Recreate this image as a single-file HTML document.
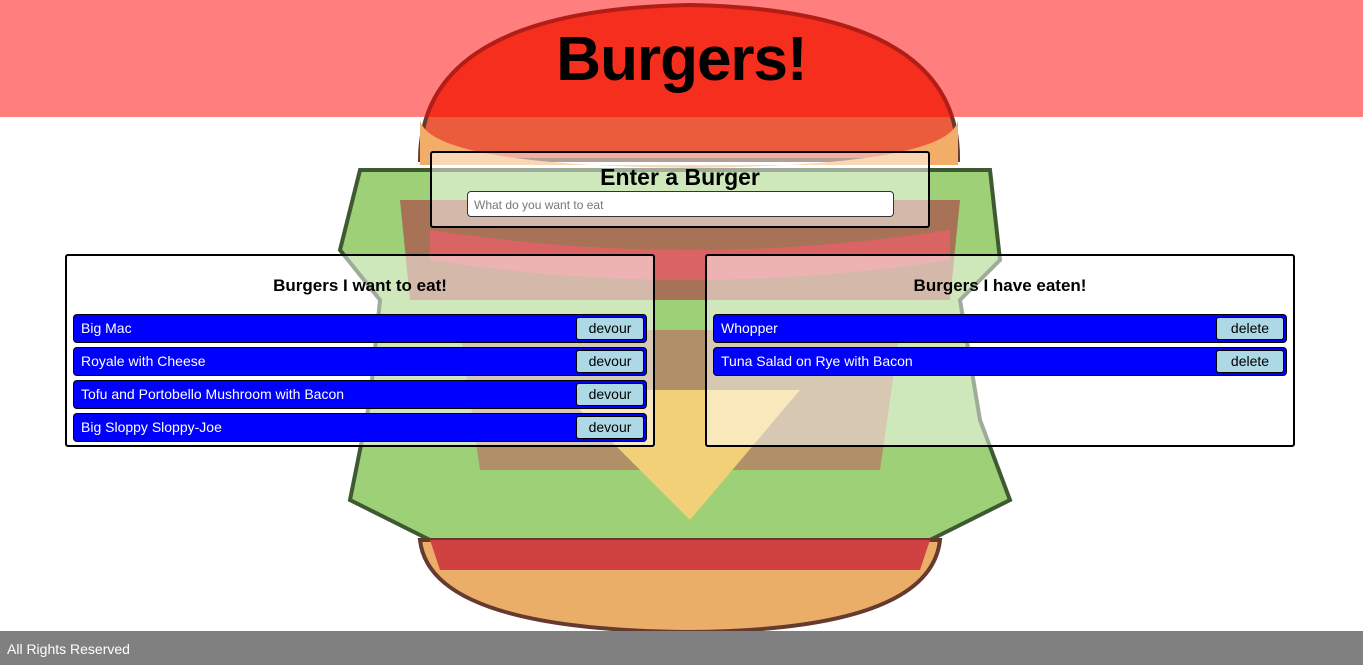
<!DOCTYPE html><html><head><style>
body{margin:0;width:1363px;height:665px;position:relative;overflow:hidden;background:#fff;font-family:"Liberation Sans",sans-serif}
svg.bg{position:absolute;left:0;top:0;opacity:.85}
.hdr{position:absolute;left:0;top:0;width:1363px;height:117px;background:rgba(255,0,0,.5)}
h1{position:absolute;left:0;width:1363px;top:24px;margin:0;text-align:center;font-size:62px;font-weight:bold;letter-spacing:-1px}
.box{position:absolute;border:2px solid #000;border-radius:3px;background:rgba(255,255,255,.5);box-sizing:border-box}
.ent h2{margin:0;text-align:center;font-size:23px;padding-top:11px}
.inp{position:absolute;left:35px;top:38px;width:427px;height:26px;background:#fff;border:1px solid #333;border-radius:4px;box-sizing:border-box;font-size:12px;color:#777;padding:6px 6px}
.box h3{margin:0;position:absolute;left:0;right:0;top:20px;text-align:center;font-size:17px}
.row{position:absolute;left:6px;right:6px;height:29px;background:#00f;border:1px solid #000;border-radius:4px;box-sizing:border-box;color:#fff;font-size:14px;line-height:27px;padding-left:7px}
.row b{font-weight:normal;position:absolute;right:2px;top:2px;width:68px;height:23px;background:#add8e6;color:#000;border:1px solid #000;border-radius:3px;box-sizing:border-box;text-align:center;line-height:21px;font-size:14px}
.ft{position:absolute;left:0;top:631px;width:1363px;height:34px;background:#808080;color:#fff;font-size:14px;line-height:36px;padding-left:7px;box-sizing:border-box}
</style></head><body>
<svg class="bg" width="1363" height="665">
<path d="M420 160 Q420 10 690 5 Q960 10 958 160 Z" fill="#e8401c" stroke="#4a1a0a" stroke-width="4"/>
<path d="M420 120 Q430 165 690 168 Q950 165 958 120 L958 165 L420 165Z" fill="#f0a050"/>
<path d="M360 170 L990 170 L1000 260 L960 300 L980 420 L1010 500 L930 540 L430 540 L350 500 L370 400 L380 300 L340 250Z" fill="#8cc860" stroke="#1e3d10" stroke-width="4"/>
<path d="M400 200 L960 200 L950 300 L410 300Z" fill="#9a5a3a"/>
<path d="M430 230 Q690 270 950 230 L950 260 Q690 300 430 260Z" fill="#d44a4a"/>
<path d="M460 330 L900 330 L880 470 L480 470Z" fill="#a86a48" opacity=".8"/>
<path d="M560 390 L800 390 L690 520Z" fill="#f0c860"/>
<path d="M420 540 L940 540 Q930 630 690 632 Q430 630 420 540Z" fill="#e8a050" stroke="#4a1a0a" stroke-width="4"/>
<path d="M430 540 L930 540 L920 570 L440 570Z" fill="#c82020"/>
</svg>
<div class="hdr"></div>
<h1>Burgers!</h1>
<div class="box ent" style="left:430px;top:151px;width:500px;height:77px"><h2>Enter a Burger</h2><div class="inp">What do you want to eat</div></div>
<div class="box" style="left:65px;top:254px;width:590px;height:193px"><h3>Burgers I want to eat!</h3>
<div class="row" style="top:58px">Big Mac<b>devour</b></div>
<div class="row" style="top:91px">Royale with Cheese<b>devour</b></div>
<div class="row" style="top:124px">Tofu and Portobello Mushroom with Bacon<b>devour</b></div>
<div class="row" style="top:157px">Big Sloppy Sloppy-Joe<b>devour</b></div>
</div>
<div class="box" style="left:705px;top:254px;width:590px;height:193px"><h3>Burgers I have eaten!</h3>
<div class="row" style="top:58px">Whopper<b>delete</b></div>
<div class="row" style="top:91px">Tuna Salad on Rye with Bacon<b>delete</b></div>
</div>
<div class="ft">All Rights Reserved</div>
</body></html>
